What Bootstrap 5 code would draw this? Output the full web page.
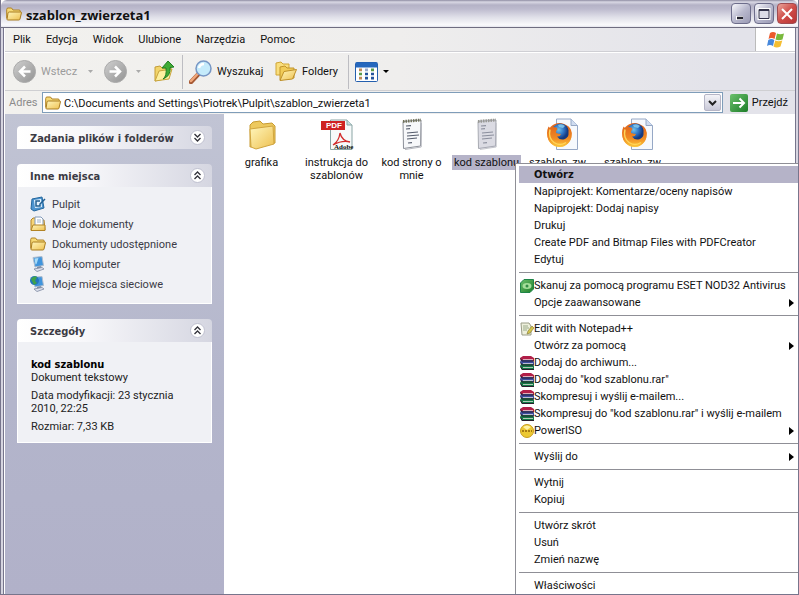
<!DOCTYPE html>
<html lang="pl">
<head>
<meta charset="utf-8">
<meta name="viewport" content="width=device-width, initial-scale=1">
<title>szablon_zwierzeta1</title>
<link href="https://cdn.jsdelivr.net/npm/bootstrap@5.3.0/dist/css/bootstrap.min.css" rel="stylesheet">
<style>
body{font-family:Roboto,"DejaVu Sans Condensed",sans-serif;font-size:11px;line-height:13px;color:#111;background:#fff}
button,input{font:inherit;color:inherit}
button{background:none;border:0;padding:0;text-align:left;white-space:nowrap}
svg{display:block;flex:none}
.xp-window{background:#fff;border:solid #77758c;border-width:0 1px 1px}
.xp-inner{border:solid #d6d5e0;border-width:0 2px;box-shadow:inset 1px 0 #77758c,inset -1px 0 #77758c;padding:0 1px 0 2px}
.titlebar{height:28px;padding:0 1px 0 5px;gap:4px;border-radius:6px 6px 0 0;border-bottom:1px solid #6f6d80;background:linear-gradient(#8e8ca2 0,#d9d8e4 2px,#b4b2c6 5px,#bdbbce 9px,#dfdfe8 17px,#fafafc 25px,#e4e4ec 27px)}
.title-text{font-family:"Open Sans","Noto Sans",sans-serif;font-size:13px;line-height:18px;font-weight:700;margin:0;padding-top:2px;color:#111}
.caps{gap:3px}
.cap{width:20px;height:21px;border:1px solid #6d6d8b;border-radius:4px;background:linear-gradient(135deg,#f8f8fc,#b9b9ce 50%,#9a9ab4);display:grid;place-items:center}
.cap-close{background:linear-gradient(135deg,#e9a49b,#cf4d48 50%,#b83535);border-color:#a04b50}
.chrome{background:linear-gradient(90deg,#f2f1ee,#efeeed 50%,#e3e3ea 90%)}
.menubar{height:24px;gap:15px;padding-left:8px;border-bottom:1px solid #cfcfd4}
.flag{width:40px;height:23px;background:#fff;border-left:1px solid #bbb;display:grid;place-items:center}
.toolbar{height:39px;border-top:1px solid #fff;border-bottom:1px solid #cfcfd2;padding-left:8px}
.toolbar button{display:flex;align-items:center;gap:5px}
.tb-back{width:63px;color:#9b9b9b}
.toolbar .tb-drop{width:28px;height:24px;justify-content:center}
.toolbar .tb-next{width:22px}
.tb-up{width:27px;padding-left:5px;height:24px}
.tb-sep{width:1px;height:34px;background:#bdbdc2;margin:0 6px}
.tb-find{width:86px}.tb-fold{width:67px}
.addr{height:23px;padding-left:4px;gap:4px}
.addr label{color:#8b8b8b;width:29px}
.combo{height:21px;border:1px solid #7f9db9;background:#fff;padding:1px 1px 1px 2px;gap:3px}
.combo input{border:0;outline:0;padding:2px 0 0;min-width:0;background:transparent}
.combo button{width:17px;height:17px;display:grid;place-items:center;border:1px solid #b5b5c6;border-radius:2px;background:linear-gradient(#f4f4f8,#c9c9d8)}
.go{gap:4px;padding:0 7px 0 3px}
.tasks{width:219px;padding:12px 12px 0;gap:15px;background:linear-gradient(#c1c4d4,#b3b5cb 60%,#b1b1c9)}
.panel-head{height:23px;padding:0 7px 0 13px;border-radius:4px 4px 0 0;background:linear-gradient(90deg,#fff,#f7f7fa 35%,#d5d6e1)}
.panel-head h2{font-family:"DejaVu Sans Condensed","Noto Sans",sans-serif;font-size:11px;line-height:14px;font-weight:700;margin:0;padding-top:3px;color:#3b3b44}
.panel-box{background:#f0f1f5;border:1px solid #fff;border-top:0}
.places{padding:7px 12px 9px}
.places a{height:20px;gap:6px;color:#3b3b46;text-decoration:none}
.details{padding:16px 12px 9px 13px;gap:5px;color:#222}
.details p{margin:0}
.details strong,.ctx-default{font-family:"DejaVu Sans Condensed","Noto Sans",sans-serif}
.file{width:75px;gap:3px;text-align:center;white-space:normal}
.file-name{padding:1px 2px}
.picked{background:#b5b3c8;white-space:nowrap}
.ctx{left:514px;top:163px;right:0;background:#fff;border:solid #8f8f96;border-width:1px 0 0 1px;padding:2px 0 2px 3px}
.ctx-item{display:flex;align-items:center;height:17px;width:100%;padding:0 4px 0 1px}
.ctx-item .slot{width:14px;height:14px;flex:none}
.ctx-item .tri{margin-left:auto}
.ctx-default{background:#b5b3c8;font-weight:700!important}
.ctx hr{margin:4px 0;border:0;border-top:1px solid #8f8f96;opacity:1}
</style>
<script src="https://cdn.jsdelivr.net/npm/bootstrap@5.3.0/dist/js/bootstrap.bundle.min.js"></script>
</head>
<body>
<svg width="0" height="0" class="position-absolute" aria-hidden="true">
<defs>
<linearGradient id="gy" x1="0" y1="0" x2="1" y2="1"><stop offset="0" stop-color="#fff7bd"/><stop offset="1" stop-color="#eec050"/></linearGradient>
<linearGradient id="gg" x1="0" y1="0" x2="1" y2="1"><stop offset="0" stop-color="#d0d0d0"/><stop offset="1" stop-color="#929292"/></linearGradient>
<linearGradient id="gn" x1="0" y1="0" x2="1" y2="1"><stop offset="0" stop-color="#6cc06c"/><stop offset="1" stop-color="#1c7d28"/></linearGradient>
<radialGradient id="gf" cx=".4" cy=".35"><stop offset="0" stop-color="#6fc4ee"/><stop offset=".6" stop-color="#2d6fc0"/><stop offset="1" stop-color="#163a80"/></radialGradient>
<linearGradient id="go" x1="0" y1="0" x2="0" y2="1"><stop offset="0" stop-color="#e0641c"/><stop offset=".6" stop-color="#f08a22"/><stop offset="1" stop-color="#fbc63c"/></linearGradient>
<symbol id="folder" viewBox="0 0 16 14"><path d="M.7 11.500V2.500Q.7 1 2 1h3.500l1.500 2h6q1.300 0 1.300 1.300V6" fill="#f6d976" stroke="#b08326"/><path d="M1 12.500 2 6q.2-1 1.200-1h11.500q1 0 .7 1l-1.400 6q-.2 1-1.200 1H2Q1 13 1 12.500Z" fill="url(#gy)" stroke="#a97c20"/></symbol>
<symbol id="chev-up" viewBox="0 0 15 15"><circle cx="7.500" cy="7.500" r="7" fill="#fff" stroke="#bfc0cf"/><path d="m4.500 7 3-3 3 3m-6 4 3-3 3 3" fill="none" stroke="#33333b" stroke-width="1.300"/></symbol>
<symbol id="chev-down" viewBox="0 0 15 15"><circle cx="7.500" cy="7.500" r="7" fill="#fff" stroke="#bfc0cf"/><path d="m4.500 4 3 3 3-3m-6 4 3 3 3-3" fill="none" stroke="#33333b" stroke-width="1.300"/></symbol>
<symbol id="note" viewBox="0 0 24 32"><path d="M3 3.500 21 2l-.5 26-17 2.500Z" fill="#f7f8fa" stroke="#8c9099"/><path d="m21.500 5-.3 24L5 31.500" fill="none" stroke="#b6b8bf"/><path d="M3 3.500 21 2" stroke="#70715a" stroke-width="3" stroke-dasharray="1.500 1"/><path d="m6 8 5-.4M6 11l4-.3M7 15l11-1M7 18l12-1M7 21l10-1M8 25l4-.4" stroke="#555c6c" stroke-width="1.200"/></symbol>
<symbol id="firefox" viewBox="0 0 34 33"><path d="M11.500 1H26l6.500 6.500V31.500h-21Z" fill="#f6f9fd" stroke="#96a8c6"/><path d="M26 1v6.500h6.500" fill="#cfdcf0" stroke="#96a8c6"/><circle cx="14.500" cy="17" r="12" fill="url(#go)"/><circle cx="15.500" cy="14.500" r="9" fill="url(#gf)"/><path d="M3.500 8.500Q5 11 8 9q4 0 4.500 2-2 2-1.500 4 3 1 5 1-1 3-4 2.500 3 4.500 8 2.500 4-2 3.500-6.500Q24 10 21 7q5 2 5.800 8Q27 25 18 28.500 8 30 3.500 22 .5 15 3.500 8.500Z" fill="url(#go)"/><path d="M5 11.500Q3 20 9 24.500q6 4 12 0" fill="none" stroke="#ffd65a" stroke-width="1.500"/><path d="M13 7q4-2 7 1l-2 2-4-1Z" fill="#8cd0ee" opacity=".8"/></symbol>
<symbol id="books" viewBox="0 0 14 14"><path d="m0 2 3-2h8l3 2v3l-2 0H1Z" fill="#b11f48"/><path d="m0 6 1-2h11l2 2v3H2Z" fill="#3d4fa0"/><path d="m0 10 1-2h11l2 2v3l-2 1H2Z" fill="#147a46"/><path d="M3 3.500h10M3 7.500h10M3 11.500h10" stroke="#f5eceb" stroke-width=".7"/><path d="M.5 2.500 2 5h12M.5 6.500 2 9h12M.5 10.500 2 13.500h12" fill="none" stroke="#291c2c"/></symbol>
<symbol id="tri" viewBox="0 0 5 8"><path d="m0 0 5 4-5 4Z" fill="#000"/></symbol>
<symbol id="monitor" viewBox="0 0 16 16"><path d="m3 1.500 9-1 1.500 9L5 11Z" fill="#3f94dc" stroke="#aebccd"/><path d="m4.500 2.500 4-.5-2 6-1 .5Z" fill="#a9dcf8"/><path d="m7 11 4-1 1 3H7Z" fill="#8390a5"/><path d="m4 13 8-1.500 2 1.500-7 2.500Z" fill="#dfe3ee" stroke="#7b86a0" stroke-width=".8"/></symbol>
</defs>
</svg>

<div class="xp-window vh-100 overflow-hidden position-relative d-flex flex-column">
  <header class="titlebar d-flex align-items-center flex-shrink-0">
    <svg width="16" height="14"><use href="#folder"/></svg>
    <h1 class="title-text flex-grow-1">szablon_zwierzeta1</h1>
    <div class="caps d-flex">
      <button class="cap" aria-label="Minimalizuj"><svg width="14" height="14"><path d="M2 11h7" stroke="#fff" stroke-width="4"/><path d="M3 11h6" stroke="#22222e" stroke-width="2.500"/></svg></button>
      <button class="cap" aria-label="Maksymalizuj"><svg width="14" height="14"><path d="M2 2.500h10v9H2Z" fill="none" stroke="#fff" stroke-width="3"/><path d="M2 2.500h10v9H2Z" fill="#dcdce6" stroke="#33334a"/><path d="M2 3h10" stroke="#33334a" stroke-width="2"/></svg></button>
      <button class="cap cap-close" aria-label="Zamknij"><svg width="14" height="14"><path d="m2 2 10 10M12 2 2 12" stroke="#fff" stroke-width="2"/></svg></button>
    </div>
  </header>
  <div class="xp-inner flex-grow-1 d-flex flex-column">
    <div class="chrome">
      <nav class="menubar d-flex align-items-center" aria-label="Menu">
        <button>Plik</button><button>Edycja</button><button>Widok</button><button>Ulubione</button><button>Narzędzia</button><button>Pomoc</button>
        <span class="flag ms-auto"><svg width="20" height="18" viewBox="0 0 20 18"><path d="M4 2q3-2 6 0L8.500 8q-3-2-6 0Z" fill="#ec5b2c"/><path d="M11 2.500q3 1.500 7 0L16.500 8.500q-4 1.500-7 0Z" fill="#79b93c"/><path d="M2.300 9q3-2 6 0L7 15q-3-2-6 0Z" fill="#4688dc"/><path d="M9.300 9.500q3 1.500 7 0L14.500 15.500q-4 2-7 0Z" fill="#f5be32"/></svg></span>
      </nav>
      <div class="toolbar d-flex align-items-center">
        <button class="tb-back"><svg width="23" height="23"><circle cx="11.500" cy="11.500" r="11" fill="url(#gg)" stroke="#aaa"/><path d="M17.500 11.500H7m5-5-5 5 5 5" fill="none" stroke="#fff" stroke-width="2.500"/></svg>Wstecz</button>
        <button class="tb-drop" aria-label="Historia wstecz"><svg width="5" height="3"><path d="M0 0h5L2.500 3Z" fill="#aaa"/></svg></button>
        <button aria-label="Dalej"><svg width="23" height="23"><circle cx="11.500" cy="11.500" r="11" fill="url(#gg)" stroke="#aaa"/><path d="M5.500 11.500H16m-5-5 5 5-5 5" fill="none" stroke="#fff" stroke-width="2.500"/></svg></button>
        <button class="tb-drop tb-next" aria-label="Historia dalej"><svg width="5" height="3"><path d="M0 0h5L2.500 3Z" fill="#aaa"/></svg></button>
        <button class="tb-up" aria-label="Do góry"><svg width="20" height="23" viewBox="0 0 20 23"><path d="M1 21V7l5-1 2 2h9l-2 10Z" fill="#f2d56b" stroke="#c39c37"/><path d="m1 21 4-10 13-2-3 10Z" fill="#fdf0a0" stroke="#c9a53e"/><path d="M9 19q4-3 3-11H8l6-7 6 6-4 .5Q17 16 9 19Z" fill="#3fab35" stroke="#217e23"/></svg></button>
        <span class="tb-sep"></span>
        <button class="tb-find"><svg width="23" height="24" viewBox="0 0 23 24"><path d="m9.500 14-7.500 8" stroke="#a55833" stroke-width="4.500" stroke-linecap="round"/><path d="M8.500 14 2 21" stroke="#f0a77b" stroke-width="2.500" stroke-linecap="round"/><circle cx="14.500" cy="8.500" r="7.500" fill="#c5ebfb" stroke="#7796c4" stroke-width="1.500"/><path d="M10 8q1-4 5-4" fill="none" stroke="#fff" stroke-width="2.500"/></svg>Wyszukaj</button>
        <button class="tb-fold"><svg width="22" height="21" viewBox="0 0 22 21"><path d="M1 14V2l5-1 2 2h6v11Z" fill="#f9de7d" stroke="#d0a537"/><path d="M5 19V6l5-1 2 2h7v10Z" fill="#f1cc58" stroke="#c2942b"/><path d="m5 19.500 4-9 12.500-2-4 9.500Z" fill="url(#gy)" stroke="#be9029"/></svg>Foldery</button>
        <span class="tb-sep"></span>
        <button aria-label="Widoki"><svg width="23" height="20"><rect x=".5" y=".5" width="22" height="19" rx="1" fill="#fff" stroke="#245fae"/><path d="M1 3h21" stroke="#2567bd" stroke-width="5"/><path d="M4 8h3M4 16h3" stroke="#c08a5a" stroke-width="3"/><path d="M4 12h3M16 8h3" stroke="#5b9a48" stroke-width="3"/><path d="M10 8h3" stroke="#9ac" stroke-width="3"/><path d="M10 12h3M10 16h3M16 12h3M16 16h3" stroke="#24539c" stroke-width="3"/><path d="M2 10h19M2 14h19" stroke="#fff"/></svg><svg class="ms-n1" width="6" height="3"><path d="M0 0h6L3 3Z"/></svg></button>
      </div>
      <div class="addr d-flex align-items-center">
        <label for="path">Adres</label>
        <div class="combo d-flex align-items-center flex-grow-1">
          <svg width="16" height="14"><use href="#folder"/></svg>
          <input id="path" class="flex-grow-1" value="C:\Documents and Settings\Piotrek\Pulpit\szablon_zwierzeta1">
          <button aria-label="Lista adresów"><svg width="9" height="6"><path d="m1 1 3.500 3.500L8 1" fill="none" stroke="#222" stroke-width="2"/></svg></button>
        </div>
        <button class="go d-flex align-items-center"><svg width="18" height="18"><rect width="18" height="18" rx="2" fill="url(#gn)"/><path d="M3 9h11M9.500 4.500 14 9l-4.500 4.500" fill="none" stroke="#fff" stroke-width="2"/></svg>Przejdź</button>
      </div>
    </div>
    <main class="d-flex flex-grow-1">
      <aside class="tasks d-flex flex-column flex-shrink-0">
        <section><div class="panel-head d-flex align-items-center justify-content-between"><h2>Zadania plików i folderów</h2><button aria-label="Rozwiń"><svg width="15" height="15"><use href="#chev-down"/></svg></button></div></section>
        <section>
          <div class="panel-head d-flex align-items-center justify-content-between"><h2>Inne miejsca</h2><button aria-label="Zwiń"><svg width="15" height="15"><use href="#chev-up"/></svg></button></div>
          <div class="panel-box places">
            <a href="#" class="d-flex align-items-center"><svg width="16" height="16"><path d="m2 3 10-2 2 11-10 3-3-2Z" fill="#4c94cf" stroke="#24679e"/><path d="m4 4 7-1 1 8-7 1Z" fill="#e8f5ff"/><path d="M10 5H6v5h4V8l5-5" fill="none" stroke="#215f91" stroke-width="1.500"/></svg>Pulpit</a>
            <a href="#" class="d-flex align-items-center"><svg width="16" height="16"><path d="M1 14V4l2-2h3l1 2h7l1 10Z" fill="#f6d477" stroke="#b28325"/><path d="M5 10V1h6l2 2v7Z" fill="#fff" stroke="#829ab9"/><path d="M7 4h4M7 6h4" stroke="#9fb2ca"/><path d="M1 14.500 3 9h12v5.500Z" fill="url(#gy)" stroke="#b28325"/></svg>Moje dokumenty</a>
            <a href="#" class="d-flex align-items-center"><svg width="16" height="14"><use href="#folder"/></svg>Dokumenty udostępnione</a>
            <a href="#" class="d-flex align-items-center"><svg width="16" height="16"><use href="#monitor"/></svg>Mój komputer</a>
            <a href="#" class="d-flex align-items-center"><svg width="16" height="16"><use href="#monitor"/><circle cx="4.500" cy="4.500" r="4.500" fill="#2475bd"/><path d="M1 3q3-4 6-2L5 5l2 2-3 2Z" fill="#3fa34a"/></svg>Moje miejsca sieciowe</a>
          </div>
        </section>
        <section>
          <div class="panel-head d-flex align-items-center justify-content-between"><h2>Szczegóły</h2><button aria-label="Zwiń"><svg width="15" height="15"><use href="#chev-up"/></svg></button></div>
          <div class="panel-box details d-flex flex-column"><p><strong class="text-black">kod szablonu</strong><br>Dokument tekstowy</p><p>Data modyfikacji: 23 stycznia 2010, 22:25</p><p>Rozmiar: 7,33 KB</p></div>
        </section>
      </aside>
      <section class="d-flex flex-wrap align-content-start flex-grow-1 bg-white pt-1">
        <button class="file d-flex flex-column align-items-center"><svg width="34" height="34" viewBox="0 0 34 34"><path d="M5 29V7l3-3 7-1 3 3 9-1 3 3v17Z" fill="#edc95e" stroke="#c89b32"/><path d="m5 11 23-3 1 18-18 5-5-2Z" fill="url(#gy)" stroke="#d0a53f"/></svg><span class="file-name">grafika</span></button>
        <button class="file d-flex flex-column align-items-center"><svg width="34" height="34" viewBox="0 0 34 34"><path d="M10.500 2H27l5 5v24.500H10.500Z" fill="#f7fafa" stroke="#8aa5a5"/><path d="M27 2v5h5" fill="#c8dddd" stroke="#8aa5a5"/><path d="M1 3h24v9H1Z" fill="#cf2222"/><text x="6" y="10" font-family="Liberation Sans,sans-serif" font-size="8" font-weight="700" fill="#fff">PDF</text><path d="M13 27q6-4 7-12 2 8 10 9-8-2-17 3Z" fill="none" stroke="#d22c2c" stroke-width="1.300"/><text x="14" y="31" font-family="Liberation Serif,serif" font-size="7" font-weight="700" fill="#111">Adobe</text></svg><span class="file-name">instrukcja do szablonów</span></button>
        <button class="file d-flex flex-column align-items-center"><svg width="34" height="34" viewBox="-5 0 34 34"><use href="#note" width="24" height="32"/></svg><span class="file-name">kod strony o mnie</span></button>
        <button class="file d-flex flex-column align-items-center"><svg class="opacity-75" width="34" height="34" viewBox="-5 0 34 34"><use href="#note" width="24" height="32"/><path d="m3 2 18-1v28L4 31Z" fill="#85859d" opacity=".35"/></svg><span class="file-name picked">kod szablonu</span></button>
        <button class="file d-flex flex-column align-items-center"><svg width="34" height="34"><use href="#firefox" width="34" height="33"/></svg><span class="file-name">szablon_zw...</span></button>
        <button class="file d-flex flex-column align-items-center"><svg width="34" height="34"><use href="#firefox" width="34" height="33"/></svg><span class="file-name">szablon_zw...</span></button>
      </section>
    </main>
  </div>

  <div class="ctx position-absolute" role="menu">
    <button class="ctx-item ctx-default" role="menuitem"><span class="slot"></span>Otwórz</button>
    <button class="ctx-item" role="menuitem"><span class="slot"></span>Napiprojekt: Komentarze/oceny napisów</button>
    <button class="ctx-item" role="menuitem"><span class="slot"></span>Napiprojekt: Dodaj napisy</button>
    <button class="ctx-item" role="menuitem"><span class="slot"></span>Drukuj</button>
    <button class="ctx-item" role="menuitem"><span class="slot"></span>Create PDF and Bitmap Files with PDFCreator</button>
    <button class="ctx-item" role="menuitem"><span class="slot"></span>Edytuj</button>
    <hr>
    <button class="ctx-item" role="menuitem"><svg class="slot" viewBox="0 0 14 14"><path d="M4 .5h9.500V10L10 13.500H.5V4Z" fill="url(#gn)" stroke="#1e8548"/><ellipse cx="7" cy="7" rx="4.500" ry="3" fill="#a5df9b"/><circle cx="7" cy="7" r="1.500" fill="#338d45"/></svg>Skanuj za pomocą programu ESET NOD32 Antivirus</button>
    <button class="ctx-item" role="menuitem"><span class="slot"></span>Opcje zaawansowane<svg class="tri" width="5" height="8"><use href="#tri"/></svg></button>
    <hr>
    <button class="ctx-item" role="menuitem"><svg class="slot" viewBox="0 0 14 14"><path d="M1 1h8l2 3v9H2Z" fill="#eef0dc" stroke="#9a9c87"/><path d="M3 4h5M3 6h6M3 8h4" stroke="#9aa98a"/><path d="m7 12 1-3 4-5 2 2-4 5Z" fill="#d5c74b" stroke="#8d8340" stroke-width=".7"/></svg>Edit with Notepad++</button>
    <button class="ctx-item" role="menuitem"><span class="slot"></span>Otwórz za pomocą<svg class="tri" width="5" height="8"><use href="#tri"/></svg></button>
    <button class="ctx-item" role="menuitem"><svg class="slot"><use href="#books"/></svg>Dodaj do archiwum...</button>
    <button class="ctx-item" role="menuitem"><svg class="slot"><use href="#books"/></svg>Dodaj do "kod szablonu.rar"</button>
    <button class="ctx-item" role="menuitem"><svg class="slot"><use href="#books"/></svg>Skompresuj i wyślij e-mailem...</button>
    <button class="ctx-item" role="menuitem"><svg class="slot"><use href="#books"/></svg>Skompresuj do "kod szablonu.rar" i wyślij e-mailem</button>
    <button class="ctx-item" role="menuitem"><svg class="slot" viewBox="0 0 14 14"><circle cx="7" cy="7" r="6.500" fill="#ecc833" stroke="#c79c1c"/><path d="M3 3q4-3 8 0L7 6Z" fill="#fff3a4"/><path d="M2 7h10" stroke="#a77b14" stroke-width="2" stroke-dasharray="2 1"/></svg>PowerISO<svg class="tri" width="5" height="8"><use href="#tri"/></svg></button>
    <hr>
    <button class="ctx-item" role="menuitem"><span class="slot"></span>Wyślij do<svg class="tri" width="5" height="8"><use href="#tri"/></svg></button>
    <hr>
    <button class="ctx-item" role="menuitem"><span class="slot"></span>Wytnij</button>
    <button class="ctx-item" role="menuitem"><span class="slot"></span>Kopiuj</button>
    <hr>
    <button class="ctx-item" role="menuitem"><span class="slot"></span>Utwórz skrót</button>
    <button class="ctx-item" role="menuitem"><span class="slot"></span>Usuń</button>
    <button class="ctx-item" role="menuitem"><span class="slot"></span>Zmień nazwę</button>
    <hr>
    <button class="ctx-item" role="menuitem"><span class="slot"></span>Właściwości</button>
  </div>
</div>
</body>
</html>
